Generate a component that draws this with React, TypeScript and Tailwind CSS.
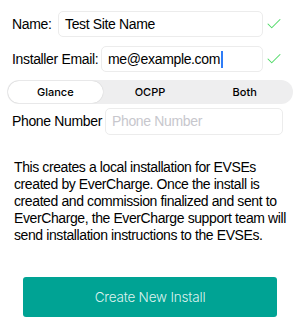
import { Check } from 'lucide-react'

const font = { fontFamily: '"Liberation Sans", Arial, sans-serif' }
const inter = { fontFamily: 'Inter, "Noto Sans", sans-serif' }

export default function App() {
    return (
        <div className="w-[300px] h-[326px] bg-white text-black overflow-hidden tracking-[-0.35px]" style={font}>
            <div className="flex flex-col pt-[11px]">
                <div className="flex items-center h-[26px] pl-[12px]">
                    <span className="shrink-0 whitespace-nowrap text-[14px] w-[46px]">Name:</span>
                    <div className="shrink-0 flex items-center w-[205px] h-[26px] rounded-[5px] border border-[#ececec] pl-[6px] text-[14px]">
                        Test Site Name
                    </div>
                    <Check className="shrink-0 ml-[2px] w-[18px] h-[18px] text-[#4cd964]" strokeWidth={1.4} />
                </div>
                <div className="flex items-center h-[26px] mt-[9px] pl-[12px]">
                    <span className="shrink-0 whitespace-nowrap text-[14px] w-[89px]">Installer Email:</span>
                    <div className="shrink-0 flex items-center w-[162px] h-[26px] rounded-[5px] border border-[#ececec] pl-[6px] text-[14px]">
                        me@example.com
                        <span className="ml-[1px] w-[2px] h-[17px] bg-[#2f7cf6]" />
                    </div>
                    <Check className="shrink-0 ml-[2px] w-[18px] h-[18px] text-[#4cd964]" strokeWidth={1.4} />
                </div>
                <div className="flex mx-[7px] mt-[8px] h-[24px] w-[286px] rounded-full bg-[#eeeeef] p-[1px] text-[11px] font-medium tracking-normal" style={inter}>
                    <div className="flex flex-1 items-center justify-center rounded-full bg-white shadow-[0_0_1px_rgba(0,0,0,0.25)]">Glance</div>
                    <div className="flex flex-1 items-center justify-center">OCPP</div>
                    <div className="flex flex-1 items-center justify-center">Both</div>
                </div>
                <div className="flex items-center h-[27px] mt-[4px] pl-[12px]">
                    <span className="shrink-0 whitespace-nowrap text-[14px] w-[93px]">Phone Number</span>
                    <div className="shrink-0 flex items-center w-[178px] h-[27px] rounded-[5px] border border-[#ececec] pl-[6px] text-[14px] text-[#c7c7cd]">
                        Phone Number
                    </div>
                </div>
                <p className="mt-[24px] pl-[14px] pr-[4px] text-[14px] leading-[17px] tracking-[-0.4px]">
                    This creates a local installation for EVSEs created by EverCharge. Once the install is created and commission finalized and sent to EverCharge, the EverCharge support team will send installation instructions to the EVSEs.
                </p>
                <button className="mt-[33px] mx-[23px] h-[40px] w-[254px] rounded-[3px] bg-[#00a394] text-[13.5px] font-light text-[#dcf2ee] tracking-[-0.2px]" style={inter}>
                    Create New Install
                </button>
            </div>
        </div>
    )
}
